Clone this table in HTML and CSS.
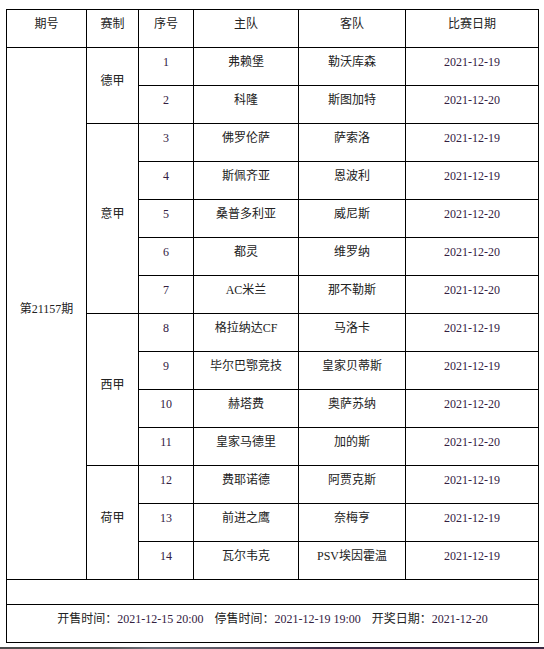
FILE: index.html
```html
<!DOCTYPE html>
<html lang="zh-CN">
<head>
<meta charset="utf-8">
<title>第21157期</title>
<link rel="stylesheet" href="styles.css">
</head>
<body>
<table class="sched">
  <colgroup>
    <col class="c-issue"><col class="c-league"><col class="c-no"><col class="c-home"><col class="c-away"><col class="c-date">
  </colgroup>
  <thead>
    <tr class="row"><th>期号</th><th>赛制</th><th>序号</th><th>主队</th><th>客队</th><th>比赛日期</th></tr>
  </thead>
  <tbody>
    <tr class="row"><td rowspan="14">第21157期</td><td rowspan="2">德甲</td><td class="num">1</td><td>弗赖堡</td><td>勒沃库森</td><td class="num">2021-12-19</td></tr>
    <tr class="row"><td class="num">2</td><td>科隆</td><td>斯图加特</td><td class="num">2021-12-20</td></tr>
    <tr class="row"><td rowspan="5">意甲</td><td class="num">3</td><td>佛罗伦萨</td><td>萨索洛</td><td class="num">2021-12-19</td></tr>
    <tr class="row"><td class="num">4</td><td>斯佩齐亚</td><td>恩波利</td><td class="num">2021-12-19</td></tr>
    <tr class="row"><td class="num">5</td><td>桑普多利亚</td><td>威尼斯</td><td class="num">2021-12-20</td></tr>
    <tr class="row"><td class="num">6</td><td>都灵</td><td>维罗纳</td><td class="num">2021-12-20</td></tr>
    <tr class="row"><td class="num">7</td><td>AC米兰</td><td>那不勒斯</td><td class="num">2021-12-20</td></tr>
    <tr class="row"><td rowspan="4">西甲</td><td class="num">8</td><td>格拉纳达CF</td><td>马洛卡</td><td class="num">2021-12-19</td></tr>
    <tr class="row"><td class="num">9</td><td>毕尔巴鄂竞技</td><td>皇家贝蒂斯</td><td class="num">2021-12-19</td></tr>
    <tr class="row"><td class="num">10</td><td>赫塔费</td><td>奥萨苏纳</td><td class="num">2021-12-20</td></tr>
    <tr class="row"><td class="num">11</td><td>皇家马德里</td><td>加的斯</td><td class="num">2021-12-20</td></tr>
    <tr class="row"><td rowspan="3">荷甲</td><td class="num">12</td><td>费耶诺德</td><td>阿贾克斯</td><td class="num">2021-12-19</td></tr>
    <tr class="row"><td class="num">13</td><td>前进之鹰</td><td>奈梅亨</td><td class="num">2021-12-19</td></tr>
    <tr class="row"><td class="num">14</td><td>瓦尔韦克</td><td>PSV埃因霍温</td><td class="num">2021-12-19</td></tr>
    <tr class="blank"><td colspan="6"></td></tr>
    <tr class="row"><td colspan="6" class="foot">
      <span class="item">开售时间：<span class="num">2021-12-15 20:00</span></span>
      <span class="item">停售时间：<span class="num">2021-12-19 19:00</span></span>
      <span class="item">开奖日期：<span class="num">2021-12-20</span></span>
    </td></tr>
  </tbody>
</table>
<div class="shade"></div>
</body>
</html>
```
FILE: styles.css
```css
html, body {
  margin: 0;
  padding: 0;
  background: #fff;
  overflow: hidden;
}
body {
  padding: 9px 0 0 6px;
  font-family: "Liberation Serif", "Noto Sans CJK SC", serif;
  font-size: 12px;
  color: #222;
}
.sched {
  border-collapse: collapse;
  table-layout: fixed;
  width: 533px;
}
.c-issue { width: 80px; }
.c-league { width: 52px; }
.c-no { width: 55px; }
.c-home { width: 105px; }
.c-away { width: 107px; }
.c-date { width: 133px; }
.sched th,
.sched td {
  border: 1px solid #000;
  padding: 0 2px 10px;
  text-align: center;
  vertical-align: middle;
  font-weight: normal;
  line-height: 16px;
  white-space: nowrap;
}
.row { height: 38px; }
.blank { height: 25px; }
.blank td { padding: 0; }
.num { color: #33203f; }
.foot .item { margin: 0 4px; }
.shade {
  margin: 4px 0 0 -6px;
  height: 10px;
  background: linear-gradient(90deg, #4c4c4c 0%, #555 20%, #6c717c 28%, #5d5a66 40%, #3e2c48 60%, #3a2a44 100%);
}
```
